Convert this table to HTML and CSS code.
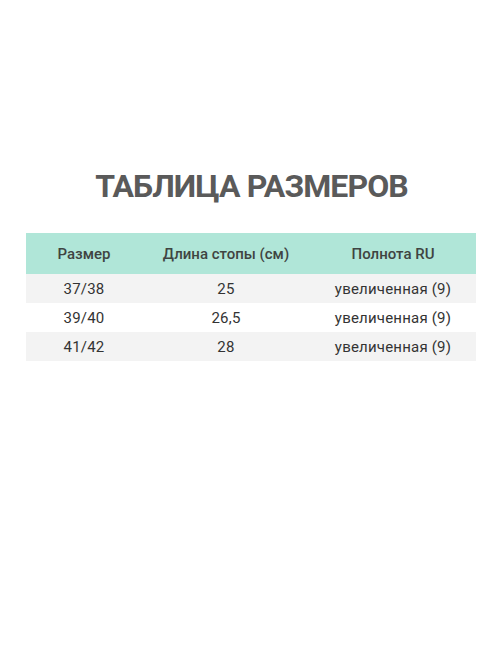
FILE: index.html
```html
<!DOCTYPE html>
<html lang="ru">
<head>
<meta charset="utf-8">
<link rel="stylesheet" href="styles.css">
</head>
<body>
<main class="page">
  <h1 class="title">ТАБЛИЦА РАЗМЕРОВ</h1>
  <table class="sizes">
    <colgroup>
      <col class="c1"><col class="c2"><col class="c3">
    </colgroup>
    <thead>
      <tr><th>Размер</th><th>Длина стопы (см)</th><th>Полнота RU</th></tr>
    </thead>
    <tbody>
      <tr class="odd"><td>37/38</td><td>25</td><td>увеличенная (9)</td></tr>
      <tr><td>39/40</td><td>26,5</td><td>увеличенная (9)</td></tr>
      <tr class="odd"><td>41/42</td><td>28</td><td>увеличенная (9)</td></tr>
    </tbody>
  </table>
</main>
</body>
</html>
```
FILE: styles.css
```css
html, body {
  margin: 0;
  padding: 0;
  background: #ffffff;
}
.page {
  width: 502px;
  height: 669px;
  padding-top: 166px;
  box-sizing: border-box;
  font-family: Roboto, "Liberation Sans", sans-serif;
}
.title {
  margin: 0;
  padding-left: 1px;
  text-align: center;
  font-size: 32px;
  font-weight: 700;
  color: #5a5a5a;
  line-height: 40px;
  letter-spacing: -0.9px;
}
.sizes {
  margin: 27px 0 0 26px;
  width: 450px;
  border-collapse: collapse;
  table-layout: fixed;
}
.c1 { width: 116px; }
.c2 { width: 168px; }
.c3 { width: 166px; }
.sizes th {
  background: #b0e6d8;
  height: 41px;
  padding: 0;
  font-size: 15px;
  font-weight: 500;
  color: #3f4442;
  text-align: center;
}
.sizes td {
  height: 29px;
  padding: 0;
  font-size: 15px;
  font-weight: 400;
  color: #333333;
  text-align: center;
  letter-spacing: 0.2px;
}
.sizes tr.odd td {
  background: #f3f3f3;
}
```
